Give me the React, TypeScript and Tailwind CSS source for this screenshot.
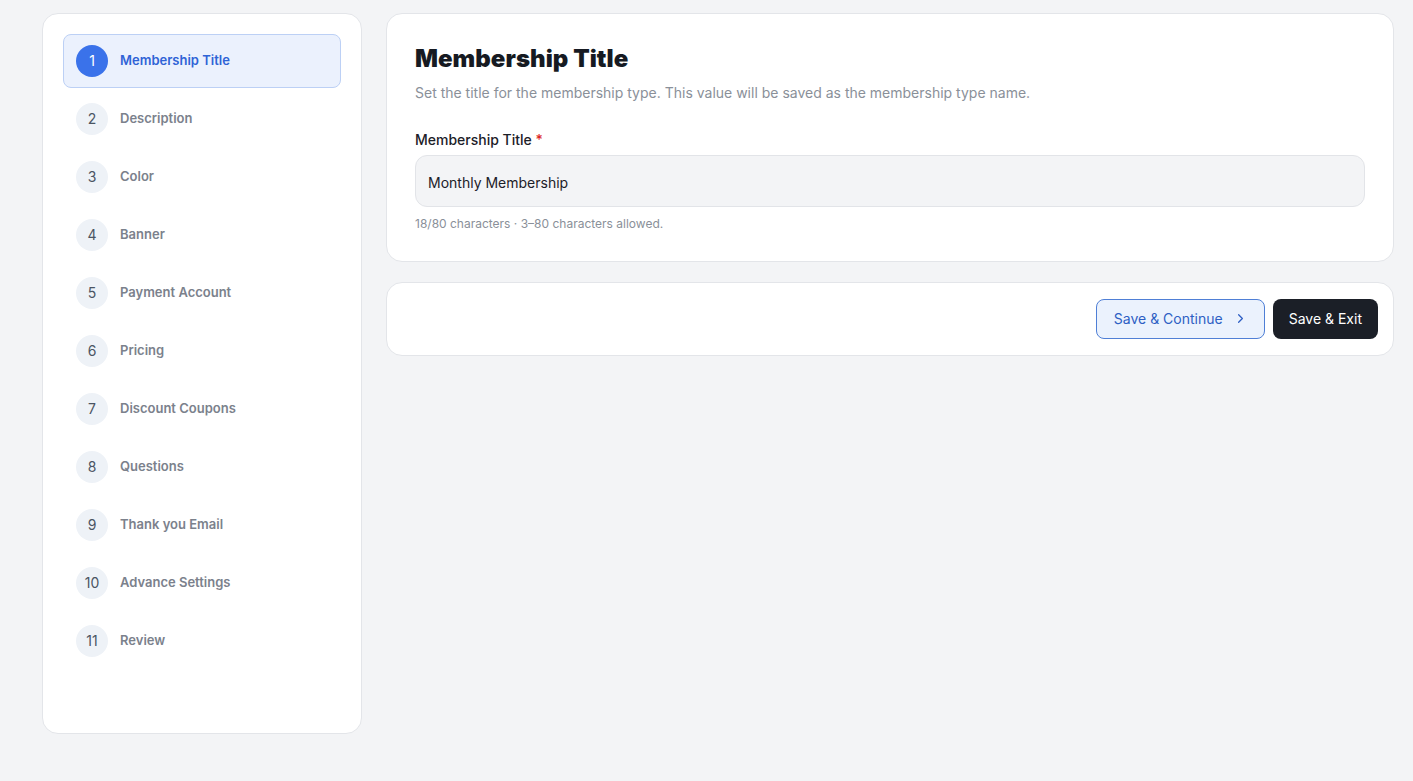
import { ChevronRight } from 'lucide-react';

const steps = [
  'Membership Title',
  'Description',
  'Color',
  'Banner',
  'Payment Account',
  'Pricing',
  'Discount Coupons',
  'Questions',
  'Thank you Email',
  'Advance Settings',
  'Review',
];

function StepItem({ index, label, active }: { index: number; label: string; active: boolean }) {
  return (
    <div
      className={
        active
          ? 'flex h-[54px] items-center gap-3 rounded-lg border border-[#bcd0f5] bg-[#ebf1fd] px-3'
          : 'flex h-[54px] items-center gap-3 rounded-lg border border-transparent px-3'
      }
    >
      <span
        className={
          active
            ? 'flex h-8 w-8 items-center justify-center rounded-full bg-[#3a72ea] text-sm text-white'
            : 'flex h-8 w-8 items-center justify-center rounded-full bg-[#eef2f7] text-sm text-[#4b5563]'
        }
      >
        {index}
      </span>
      <span
        className={
          active
            ? 'text-[13px] font-semibold text-[#2f63d6]'
            : 'text-[13px] font-semibold text-[#7b818c]'
        }
      >
        {label}
      </span>
    </div>
  );
}

export default function App() {
  return (
    <div
      className="flex min-h-screen items-start gap-6 bg-[#f3f4f6] pl-[42px] pr-[19px] pt-[13px]"
      style={{ fontFamily: 'Inter, "Noto Sans", sans-serif' }}
    >
      <aside className="flex h-[721px] w-[320px] shrink-0 flex-col gap-1 rounded-2xl border border-[#e3e5e9] bg-white p-5">
        {steps.map((s, i) => (
          <StepItem key={s} index={i + 1} label={s} active={i === 0} />
        ))}
      </aside>

      <main className="flex flex-1 flex-col gap-5">
        <section className="rounded-2xl border border-[#e3e5e9] bg-white px-7 pb-[29px] pt-[29px]">
          <h1 className="text-[24px] font-black leading-8 tracking-[0.002em] text-[#161a22]">
            Membership Title
          </h1>
          <p className="mt-2 text-[14px] leading-5 text-[#8a9099]">
            Set the title for the membership type. This value will be saved as the membership type name.
          </p>

          <label className="mt-[27px] block text-[14px] font-medium leading-5 text-[#1c2028]">
            Membership Title <span className="text-[#dc2626]">*</span>
          </label>
          <div className="mt-[5px] flex h-[52px] items-center rounded-xl border border-[#e2e4e8] bg-[#f3f4f6] px-3 pt-[3px]">
            <span className="text-[14px] text-[#1c2028]">Monthly Membership</span>
          </div>
          <p className="mt-[9px] text-[12px] leading-4 text-[#8a9099]">
            18/80 characters · 3–80 characters allowed.
          </p>
        </section>

        <section className="flex items-center justify-end gap-2 rounded-2xl border border-[#e3e5e9] bg-white px-[15px] py-4">
          <button className="flex h-10 items-center gap-[10px] rounded-lg border border-[#4f7fd6] bg-[#ebf2fd] pb-[2px] pl-[17px] pr-4 text-[14px] text-[#2e5fc4]">
            Save &amp; Continue
            <ChevronRight size={15} strokeWidth={2} />
          </button>
          <button className="flex h-10 items-center rounded-lg bg-[#1b1f27] px-4 pb-[2px] text-[14px] text-white">
            Save &amp; Exit
          </button>
        </section>
      </main>
    </div>
  );
}
